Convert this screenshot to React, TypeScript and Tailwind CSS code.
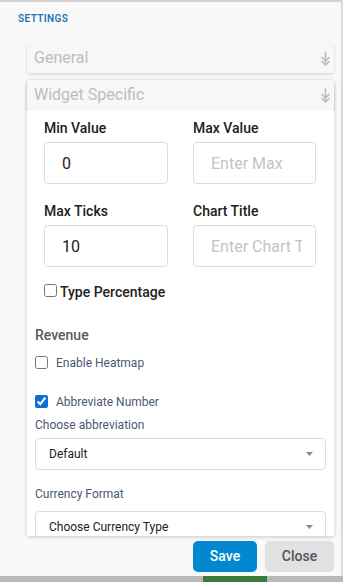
import { useState } from 'react'

function DoubleArrow() {
  return (
    <svg width="9" height="15" viewBox="0 0 9 15" fill="none" stroke="#bdbdbd" strokeWidth="1.6" strokeLinecap="round" strokeLinejoin="round">
      <path d="M4.5 1v13" />
      <path d="M1 6.5l3.5 3.5 3.5-3.5" />
      <path d="M1 10.5l3.5 3.5 3.5-3.5" />
    </svg>
  )
}

function Caret() {
  return (
    <svg width="7" height="4" viewBox="0 0 7 4">
      <path d="M0 0h7L3.5 4z" fill="#8a8a8a" />
    </svg>
  )
}

function AccordionHeader({ title }: { title: string }) {
  return (
    <div className="h-[30px] flex items-center justify-between pl-[7px] pr-[4px] bg-[#f8f7f8] rounded-[3px] shadow-[0_1px_3px_rgba(0,0,0,0.18)]">
      <span className="text-[16px] text-[#bdbdbd]">{title}</span>
      <DoubleArrow />
    </div>
  )
}

function Field({ label, value, placeholder }: { label: string; value?: string; placeholder: string }) {
  return (
    <div className="flex flex-col">
      <label className="text-[14px] leading-[20px] font-medium text-[#212121]">{label}</label>
      <input
        defaultValue={value}
        placeholder={placeholder}
        className="mt-[4px] w-full h-[42px] pl-[17px] pr-[13px] text-[16px] text-[#222] placeholder:text-[#c4c4c4] border border-[#dcdcdc] rounded-[4px] bg-white outline-none"
      />
    </div>
  )
}

function SelectBox({ text }: { text: string }) {
  return (
    <div className="h-[32px] flex items-center justify-between pl-[13px] pr-[12px] border border-[#dcdcdc] rounded-[4px] bg-white">
      <span className="text-[12px] text-[#222]">{text}</span>
      <Caret />
    </div>
  )
}

export default function App() {
  const [heatmap, setHeatmap] = useState(false)
  const [abbrev, setAbbrev] = useState(true)
  const [percent, setPercent] = useState(false)

  return (
    <div className="w-[343px] h-[582px] bg-[#e4e4e4] overflow-hidden flex flex-col font-['Roboto',sans-serif]">
      <div className="w-[341px] h-[576px] shrink-0 bg-[#faf9fa] border-t-2 border-[#d2d2d2] flex flex-col shadow-[0_1px_2px_rgba(0,0,0,0.2)]">
        <div className="pl-[18px] pt-[11px] text-[10px] leading-[12px] font-semibold tracking-[0.04em] text-[#1a76b4]">
          SETTINGS
        </div>

        <div className="ml-[27px] mr-[7px] mt-[18px] flex flex-col">
          <AccordionHeader title="General" />
          <div className="mt-[7px] rounded-[3px] shadow-[0_1px_4px_rgba(0,0,0,0.2)]">
            <AccordionHeader title="Widget Specific" />
            <div className="h-[426px] bg-white overflow-hidden">
              <div className="pl-[17px] pr-[18px] pt-[8px] grid grid-cols-[124px_123px] gap-x-[25px] gap-y-[17px]">
                <Field label="Min Value" value="0" placeholder="Enter Min" />
                <Field label="Max Value" placeholder="Enter Max" />
                <Field label="Max Ticks" value="10" placeholder="Enter Ticks" />
                <Field label="Chart Title" placeholder="Enter Chart Title" />
              </div>

              <label className="ml-[17px] mt-[15px] h-[20px] flex items-center gap-[3px]">
                <input
                  type="checkbox"
                  checked={percent}
                  onChange={(e) => setPercent(e.target.checked)}
                  className="w-[13px] h-[13px] -mt-[3px]"
                />
                <span className="text-[14px] font-medium text-[#212121]">Type Percentage</span>
              </label>

              <div className="px-[8px]">
                <div className="mt-[23px] text-[14px] leading-[20px] font-medium text-[#5a5a5a]">Revenue</div>

                <label className="mt-[10px] h-[16px] flex items-center gap-[8px]">
                  <input
                    type="checkbox"
                    checked={heatmap}
                    onChange={(e) => setHeatmap(e.target.checked)}
                    className="w-[13px] h-[13px] -mt-[2px] accent-[#0b6fd6]"
                  />
                  <span className="text-[12px] text-[#4a5874]">Enable Heatmap</span>
                </label>

                <label className="mt-[23px] h-[16px] flex items-center gap-[8px]">
                  <input
                    type="checkbox"
                    checked={abbrev}
                    onChange={(e) => setAbbrev(e.target.checked)}
                    className="w-[13px] h-[13px] -mt-[2px] accent-[#0b6fd6]"
                  />
                  <span className="text-[12px] text-[#4a5874]">Abbreviate Number</span>
                </label>

                <div className="mt-[7px] text-[12px] leading-[16px] text-[#4a5874]">Choose abbreviation</div>
                <div className="mt-[5px]">
                  <SelectBox text="Default" />
                </div>

                <div className="mt-[16px] text-[12px] leading-[16px] text-[#4a5874]">Currency Format</div>
                <div className="mt-[9px]">
                  <SelectBox text="Choose Currency Type" />
                </div>
              </div>
            </div>
          </div>
        </div>

        <div className="mt-[5px] mr-[7px] flex justify-end gap-[8px]">
          <button className="w-[64px] h-[31px] rounded-[5px] bg-[#0288d1] text-white text-[14px] font-medium">
            Save
          </button>
          <button className="w-[69px] h-[31px] rounded-[5px] bg-[#e0e1e3] text-[#555] text-[14px] font-medium">
            Close
          </button>
        </div>
      </div>
      <div className="flex-1 bg-[#b9b9b9] flex">
        <div className="ml-[203px] w-[64px] bg-[#3b7b3f]" />
      </div>
    </div>
  )
}
